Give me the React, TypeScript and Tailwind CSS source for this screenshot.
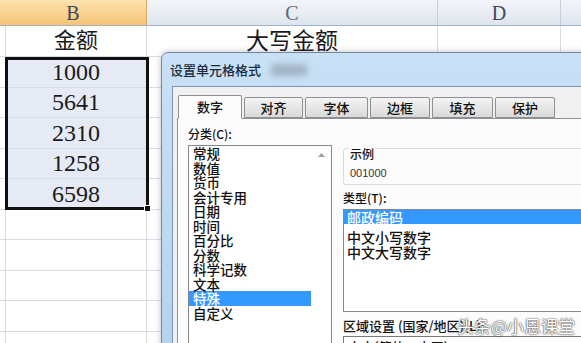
import React from 'react';

// rows below the header: B value, C value, height, selected
const sheetRows = [
  { b: '金额', c: '大写金额', h: 'h-[31px]', sel: false },
  { b: '1000', c: '', h: 'h-[30.5px]', sel: true },
  { b: '5641', c: '', h: 'h-[30.5px]', sel: true },
  { b: '2310', c: '', h: 'h-[30.5px]', sel: true },
  { b: '1258', c: '', h: 'h-[30.5px]', sel: true },
  { b: '6598', c: '', h: 'h-[30.5px]', sel: true },
  { b: '', c: '', h: 'h-[30.5px]', sel: false },
  { b: '', c: '', h: 'h-[30.5px]', sel: false },
  { b: '', c: '', h: 'h-[30.5px]', sel: false },
  { b: '', c: '', h: 'h-[30.5px]', sel: false },
  { b: '', c: '', h: 'h-[30.5px]', sel: false },
];

const tabs = [
  { label: '数字', w: 'w-[64px]', active: true },
  { label: '对齐', w: 'w-[59px]', active: false },
  { label: '字体', w: 'w-[63px]', active: false },
  { label: '边框', w: 'w-[60px]', active: false },
  { label: '填充', w: 'w-[61px]', active: false },
  { label: '保护', w: 'w-[60px]', active: false },
];

const categories = ['常规', '数值', '货币', '会计专用', '日期', '时间', '百分比', '分数', '科学记数', '文本', '特殊', '自定义'];

const SheetRow: React.FC<{ b: string; c: string; h: string; sel: boolean }> = ({ b, c, h, sel }) => (
  <div className={`flex ${h} border-b border-[#d8dde5]`}>
    <div className="w-[6px] border-r border-[#d8dde5]" />
    <div className={`w-[141px] border-r border-[#d8dde5] flex items-center justify-center ${sel ? 'bg-[#e6eaf5] text-[24px]' : 'text-[22px]'}`}>{b}</div>
    <div className="w-[291px] border-r border-[#d8dde5] flex items-center justify-center text-[23px]">{c}</div>
    <div className="w-[123px] border-r border-[#d8dde5]" />
    <div className="flex-1" />
  </div>
);

export default function App() {
  return (
    <div className="relative w-[581px] h-[343px] overflow-hidden bg-white font-['Liberation_Serif','Noto_Sans_CJK_SC',serif] text-[#1a1a1a]">
      {/* column headers */}
      <div className="flex h-[26px] border-b border-[#9fb3c9] text-[20px] text-[#3d4a5a]">
        <div className="w-[147px] border-r border-[#d9a85a] bg-linear-to-b from-[#fde3ae] to-[#f5c475] flex items-center justify-center">B</div>
        <div className="w-[291px] border-r border-[#c5ceda] bg-linear-to-b from-[#f2f5f9] to-[#dfe5ee] flex items-center justify-center text-[#5a6878]">C</div>
        <div className="w-[123px] border-r border-[#c5ceda] bg-linear-to-b from-[#f2f5f9] to-[#dfe5ee] flex items-center justify-center">D</div>
        <div className="flex-1 bg-linear-to-b from-[#f2f5f9] to-[#dfe5ee]" />
      </div>

      <div className="leading-none">
        {sheetRows.map((r, i) => (
          <SheetRow key={i} {...r} />
        ))}
      </div>

      {/* selection border + fill handle */}
      <div className="absolute left-[5px] top-[57px] w-[144px] h-[153px] border-[3px] border-[#111]" />
      <div className="absolute left-[144px] top-[205px] w-[7px] h-[7px] bg-[#111] border border-white" />

      {/* Format Cells dialog */}
      <div className="absolute left-[161px] top-[52px] w-[440px] h-[310px] flex flex-col rounded-t-[7px] border border-[#72879f] bg-linear-to-b from-[#c9e1f6] to-[#b4d1ee] shadow-[0_0_6px_rgba(0,0,0,0.25)] font-['Noto_Sans_CJK_SC',sans-serif] font-medium text-[#111]">
        <div className="h-[33px] flex items-center pl-[8px] shrink-0">
          <span className="text-[13px] leading-none text-[#1c2c3d]">设置单元格格式</span>
          <span className="ml-[10px] w-[36px] h-[12px] bg-[#7f8a98] opacity-50 blur-[3px]" />
        </div>

        <div className="ml-[10px] flex-1 flex flex-col border-l border-t border-[#8294aa] bg-[#f0f0f0] pt-[8px] pl-[4px]">
          {/* tab strip */}
          <div className="flex items-end gap-[2px] pl-[1px] -mb-px relative z-10 text-[13px]">
            {tabs.map(t => (
              <div
                key={t.label}
                className={`${t.w} flex items-center justify-center border border-[#8e9095] rounded-t-[2px] ${t.active ? 'h-[24px] bg-[#fcfcfc] border-b-[#fcfcfc]' : 'h-[21px] mb-px bg-linear-to-b from-[#f4f4f4] to-[#d9d9d9]'}`}
              >
                {t.label}
              </div>
            ))}
          </div>

          <div className="flex-1 flex border border-[#8e9095] bg-[#fcfcfc]">
            {/* category */}
            <div className="pl-[10px] pt-[8px] shrink-0">
              <div className="text-[12px] leading-[14px]">分类(C):</div>
              <div className="relative mt-[4px] w-[144px] h-[200px] border border-[#82878f] bg-white">
                <div className="w-[122px]">
                  {categories.map(c => (
                    <div key={c} className={`h-[14.5px] pl-[4px] text-[13.5px] leading-[14.5px] ${c === '特殊' ? 'bg-[#3399ff] text-white' : ''}`}>{c}</div>
                  ))}
                </div>
                <div className="absolute right-0 top-0 w-[20px] h-[17px] flex items-center justify-center">
                  <svg width="7" height="4" viewBox="0 0 7 4"><path d="M0 4 L3.5 0 L7 4 Z" fill="#9aa0a8" /></svg>
                </div>
              </div>
            </div>

            {/* right side */}
            <div className="ml-[11px] flex-1 flex flex-col">
              <div className="relative mt-[29px] h-[37px] border border-[#d5dde3] rounded-[3px] pl-[6px] pt-[17px]">
                <span className="absolute left-[5px] -top-[2px] px-[1px] bg-[#fcfcfc] text-[12px] leading-[14px]">示例</span>
                <div className="text-[11px] leading-[14px] font-['Liberation_Sans',sans-serif] font-normal text-[#333]">001000</div>
              </div>
              <div className="mt-[6px] text-[12px] leading-[14px]">类型(T):</div>
              <div className="mt-[4px] h-[103px] border border-[#82878f] bg-white text-[14px]">
                <div className="h-[14px] leading-[14px] pl-[3px] bg-[#3399ff] text-white">邮政编码</div>
                <div className="pt-[6px] pl-[3px] leading-[15px]">
                  <div>中文小写数字</div>
                  <div>中文大写数字</div>
                </div>
              </div>
              <div className="mt-[7px] text-[13px] leading-[14px]">区域设置 (国家/地区)(L):</div>
              <div className="mt-[3px] h-[22px] border border-[#7a7a7a] bg-white pl-[4px] text-[13px] leading-[20px]">中文(简体，中国)</div>
            </div>
          </div>
        </div>
      </div>

      {/* watermark */}
      <div className="absolute left-[457px] top-[316px] text-[17px] leading-[20px] text-white font-['Noto_Sans_CJK_SC',sans-serif] [text-shadow:0_0_2px_#444,0_0_1px_#222]">
        头条@小恩课堂
      </div>
    </div>
  );
}
